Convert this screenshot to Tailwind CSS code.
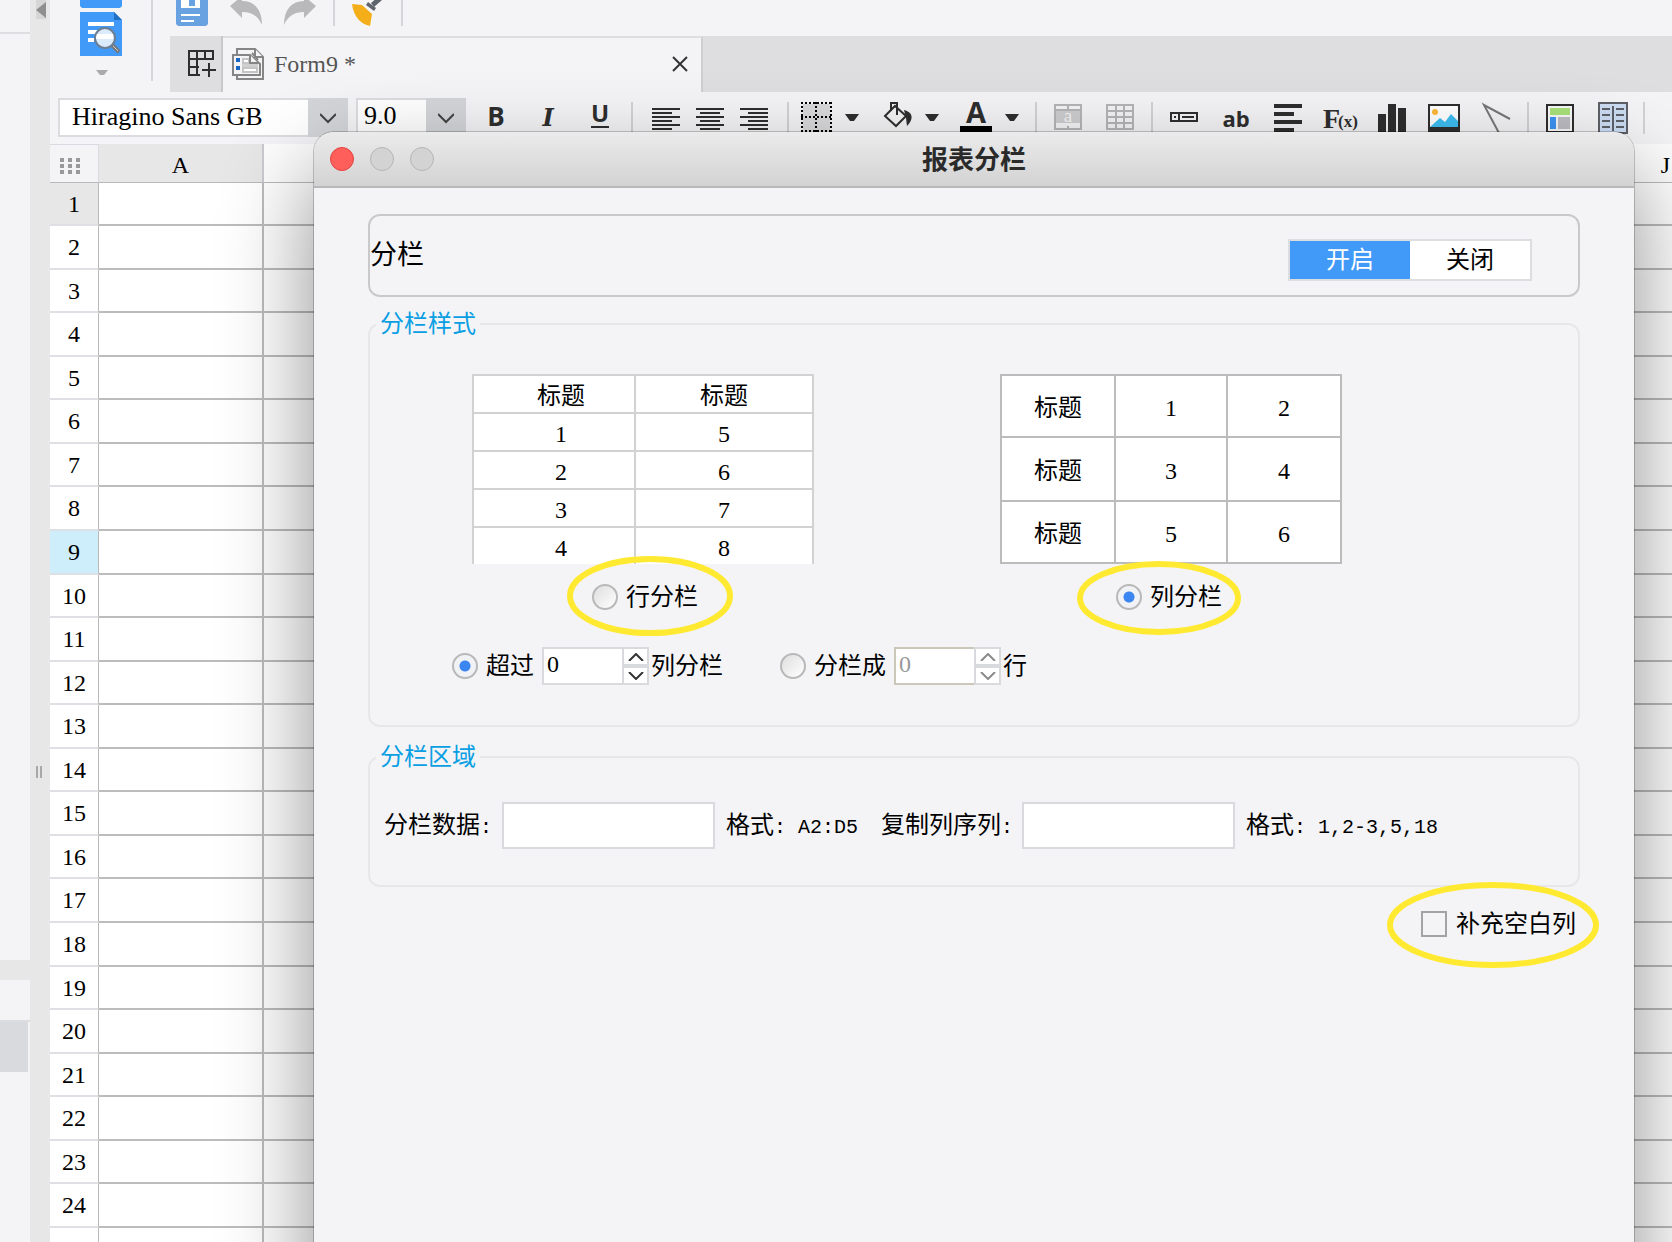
<!DOCTYPE html>
<html lang="zh-Hans">
<head>
  <meta charset="utf-8" />
  <meta name="viewport" content="width=device-width, initial-scale=1.0" />
  <title>报表分栏</title>
  <script src="https://cdn.jsdelivr.net/npm/@tailwindcss/browser@4"></script>
</head>
<body class="relative flex h-screen overflow-hidden bg-[#f4f4f7] font-['Liberation_Serif','Noto_Sans_CJK_SC',serif] text-2xl text-black">

  <!-- 左侧面板 -->
  <aside class="flex w-[30px] shrink-0 flex-col">
    <div class="h-[34px] border-b-2 border-[#dedee2]"></div>
    <div class="h-[926px]"></div>
    <div class="h-5 bg-[#e7e7e7]"></div>
    <div class="h-10"></div>
    <div class="border-t-2 border-[#dcdde1]"><div class="mr-0.5 h-[50px] bg-[#d9dade]"></div></div>
  </aside>

  <!-- 分隔条 -->
  <div class="flex w-5 shrink-0 flex-col bg-[#e7e7e7]">
    <button aria-label="收起" class="h-5 w-full">
      <svg class="h-5 w-5" viewBox="0 0 20 20"><rect x="6" width="10" height="19" fill="#d6d6d6" /><path d="M16 2v16L6 10z" fill="#8f8f8f" /></svg>
    </button>
    <div class="mt-[746px] ml-1.5 flex gap-0.5">
      <span class="h-3 w-0.5 bg-[#a8a8a8]"></span>
      <span class="h-3 w-0.5 bg-[#a8a8a8]"></span>
    </div>
  </div>

  <main class="flex min-w-0 flex-1 flex-col overflow-hidden">
    <div class="flex h-[92px] shrink-0">
      <div class="flex w-[101px] flex-col items-center">
        <button aria-label="预览">
          <svg class="h-20 w-[42px]" viewBox="0 0 42 80">
            <path d="M0 0h42v6l-2 2H2L0 6z" fill="#4199f8" />
            <path d="M0 12h34l8 8v36H0z" fill="#4199f8" />
            <path d="M34 12v8h8z" fill="#1f6fc4" />
            <path d="M8 22h26v4H8zM8 30h9v4H8zM8 38h6v4H8z" fill="#fff" />
            <path d="M32 45l7 7" stroke="#777" stroke-width="4" />
            <path d="M33 46l5 5" stroke="#ccc" stroke-width="1" />
            <circle cx="25" cy="38" r="10" fill="#dcebfb" stroke="#6d7f92" stroke-width="2" />
            <path d="M17 34h16v5H16z" fill="#fff" />
            <path d="M16 70h12l-4 5h-4z" fill="#aaa" />
          </svg>
        </button>
      </div>
      <div class="h-[81px] w-0.5 bg-[#d6d6da]"></div>

      <div class="flex min-w-0 flex-1 flex-col pl-[17px]">
        <div class="flex h-9 items-start pl-1.5">
          <button aria-label="保存">
            <svg class="h-[26px] w-8" viewBox="0 0 32 26"><path d="M0 0h32v24l-2 2H2l-2-2z" fill="#69a2e0" /><path d="M5 0h19v8H5zM5 14h19v2H5zM5 20h13v2H5z" fill="#fff" /><path d="M13 0h6v6h-6z" fill="#69a2e0" /></svg>
          </button>
          <button aria-label="撤销" class="ml-[22px]">
            <svg class="h-[26px] w-8" viewBox="0 0 32 26"><path d="M0 6L12-4v5c12 0 20 8 20 24-4-9-10-13-20-13v6z" fill="#b9b9bb" /></svg>
          </button>
          <button aria-label="重做" class="ml-[22px]">
            <svg class="h-[26px] w-8" viewBox="0 0 32 26"><path d="M32 6L20-4v5C8 1 0 9 0 25c4-9 10-13 20-13v6z" fill="#b9b9bb" /></svg>
          </button>
          <span class="ml-[17px] h-[26px] w-0.5 bg-[#d6d6da]"></span>
          <button aria-label="格式刷" class="ml-[17px]">
            <svg class="h-[26px] w-8" viewBox="0 0 32 26"><path d="M0 4l10 1 10 9-2 12c-9-2-16-8-18-22z" fill="#f3ae19" /><path d="M14 5l8 6 2-3-8-6z" fill="#5f636b" /><path d="M19 3l7-6h4v3l-8 7z" fill="#5f636b" /></svg>
          </button>
          <span class="ml-[17px] h-[26px] w-0.5 bg-[#d6d6da]"></span>
        </div>

        <!-- 标签栏 -->
        <div class="flex h-14 bg-[#dedee0]">
          <button aria-label="新建" class="w-[53px] border-r-2 border-[#c8c8cb] pl-[17px]">
            <svg class="h-[30px] w-[30px]" viewBox="0 0 30 30" fill="none" stroke="#2e2e2e" stroke-width="2"><path d="M13 26H2V2h24v9M2 10h24M2 18h10M10 2v24M18 2v8" /><path d="M15 21h14M22 14v14" /></svg>
          </button>
          <div class="flex w-[480px] items-center border-t-2 border-r-2 border-t-[#dedee0] border-r-[#cfcfd2] bg-[#f4f4f7] pb-0.5 pl-[9px] text-[#555]">
            <svg class="h-8 w-8" viewBox="0 0 32 32" fill="#f4f4f7" stroke="#858585" stroke-width="2">
              <path d="M5 1h18l8 8v22H5z" /><path d="M23 1v8h8M20 5l6 7" /><path d="M1 7h17l10 9v11H1z" />
              <path d="M10 10h8v5h8v8H10z" fill="#cfcfcf" stroke="none" /><path d="M11 11h6v4h-6zM11 20h14v4H11z" fill="#fff" stroke="#c4c4c4" />
              <path d="M18 7v8h8" /><path d="M4 10h4v4H4zM4 18h4v4H4z" fill="#1a66c2" stroke="none" />
            </svg>
            <span class="ml-2.5">Form9 *</span>
            <button aria-label="关闭标签" class="mr-[13px] ml-auto">
              <svg class="h-4 w-4" viewBox="0 0 16 16" stroke="#333" stroke-width="2"><path d="M1 1l14 14M15 1L1 15" /></svg>
            </button>
          </div>
        </div>
      </div>
    </div>

    <!-- 格式工具栏 -->
    <div class="flex h-[52px] shrink-0 items-start pt-1.5 pl-2 text-[#2e2e2e]">
      <div class="flex h-[39px] w-[290px] shrink-0 text-black">
        <input aria-label="字体" value="Hiragino Sans GB" class="min-w-0 flex-1 border-2 border-r-0 border-[#dcdce0] bg-white pl-3 text-[26px]" />
        <button aria-label="选择字体" class="flex w-10 items-center justify-center bg-[#d4d5d9]">
          <svg class="h-4 w-4" viewBox="0 0 16 16" fill="none" stroke="#444" stroke-width="2"><path d="M0 4l8 8 8-8" /></svg>
        </button>
      </div>
      <div class="ml-2 flex h-[39px] w-[110px] shrink-0 text-black">
        <input aria-label="字号" value="9.0" class="min-w-0 flex-1 border-2 border-r-0 border-[#dcdce0] bg-white pb-0.5 pl-1.5 text-[26px]" />
        <button aria-label="选择字号" class="flex w-10 items-center justify-center bg-[#d4d5d9]">
          <svg class="h-4 w-4" viewBox="0 0 16 16" fill="none" stroke="#444" stroke-width="2"><path d="M0 4l8 8 8-8" /></svg>
        </button>
      </div>

      <div class="mt-1 ml-3.5 flex h-8 shrink-0">
        <div class="flex gap-5 font-['Open_Sans',sans-serif] text-[26px] font-bold">
          <button class="h-8 w-8 pb-1 leading-6">B</button>
          <button class="h-8 w-8 font-['DejaVu_Serif',serif] text-2xl leading-7 italic">I</button>
          <button class="flex h-8 w-8 justify-center"><span class="flex h-[26px] w-[18px] justify-center border-b-2 border-[#2e2e2e] text-2xl leading-[22px]">U</span></button>
        </div>
        <span class="mx-[15px] w-0.5 bg-[#d2d2d5]"></span>
        <div class="flex gap-3 px-0.5">
          <button aria-label="左对齐"><svg class="h-8 w-8" viewBox="0 0 32 32" fill="currentColor"><path d="M2 6h28v2H2zM2 10h20v2H2zM2 14h28v2H2zM2 18h20v2H2zM2 22h28v2H2zM2 26h20v2H2z" /></svg></button>
          <button aria-label="居中"><svg class="h-8 w-8" viewBox="0 0 32 32" fill="currentColor"><path d="M2 6h28v2H2zM6 10h20v2H6zM2 14h28v2H2zM6 18h20v2H6zM2 22h28v2H2zM6 26h20v2H6z" /></svg></button>
          <button aria-label="右对齐"><svg class="h-8 w-8" viewBox="0 0 32 32" fill="currentColor"><path d="M2 6h28v2H2zM10 10h20v2H10zM2 14h28v2H2zM10 18h20v2H10zM2 22h28v2H2zM10 26h20v2H10z" /></svg></button>
        </div>
        <span class="mx-[15px] w-0.5 bg-[#d2d2d5]"></span>
        <div class="-ml-1 flex gap-5">
          <button aria-label="边框" class="flex gap-3">
            <svg class="h-8 w-8" viewBox="0 0 32 32"><path d="M3 2h27v27H3z" fill="#d9d9db" /><path d="M1 1h31M1 15h31M1 29h31" stroke="#000" stroke-width="2" stroke-dasharray="2 2" /><path d="M2 0v30M16 0v30M31 0v30" stroke="#000" stroke-width="2" stroke-dasharray="2 2" /></svg>
            <svg class="h-8 w-4" viewBox="0 0 16 32" fill="currentColor"><path d="M1 12h14l-5 7H6z" /></svg>
          </button>
          <button aria-label="填充" class="flex gap-3">
            <svg class="h-8 w-8" viewBox="0 0 32 32"><path d="M0 24h32v8H0z" fill="#f4f4f4" /><path d="M5 14L15 4l11 10-10 10z" fill="#f4f4f4" stroke="#2e2e2e" stroke-width="2" /><path d="M11 9V1h6v12" fill="none" stroke="#2e2e2e" stroke-width="2" /><path d="M24 8c9 2 10 9 3 16l-1-8z" fill="#2e2e2e" /></svg>
            <svg class="h-8 w-4" viewBox="0 0 16 32" fill="currentColor"><path d="M1 12h14l-5 7H6z" /></svg>
          </button>
          <button aria-label="字体颜色" class="flex gap-3">
            <svg class="h-8 w-8 overflow-visible font-['Open_Sans',sans-serif]" viewBox="0 0 32 32"><text x="16" y="21" text-anchor="middle" font-size="29" font-weight="700" fill="#2e2e2e">A</text><path d="M0 24h32v6H0z" /></svg>
            <svg class="h-8 w-4" viewBox="0 0 16 32" fill="currentColor"><path d="M1 12h14l-5 7H6z" /></svg>
          </button>
        </div>
        <span class="mx-[15px] w-0.5 bg-[#d2d2d5]"></span>
        <div class="flex gap-5 text-[#b4b4b6]">
          <button aria-label="单元格属性"><svg class="h-8 w-8" viewBox="0 0 32 32" fill="none" stroke="currentColor" stroke-width="2"><path d="M3 3h26v24H3z" /><path d="M3 8h26" /><path d="M16 3v4M16 24v4" /><path d="M4 9h24v12H4z" fill="#cdcdcf" stroke="none" /><text x="16" y="20" text-anchor="middle" font-size="19" fill="#f4f4f4" stroke="none">a</text></svg></button>
          <button aria-label="表格"><svg class="h-8 w-8" viewBox="0 0 32 32" fill="none" stroke="currentColor" stroke-width="2"><path d="M3 3h26v24H3zM3 9h26M3 15h26M3 21h26M12 3v24M20 3v24" /></svg></button>
        </div>
        <span class="mx-[15px] w-0.5 bg-[#d2d2d5]"></span>
        <div class="flex gap-5">
          <button aria-label="控件"><svg class="h-8 w-8" viewBox="0 0 32 32" fill="none" stroke="currentColor" stroke-width="2"><path d="M3 11h26v8H3zM11 11v8M14 15h12M6 15h2" /></svg></button>
          <button class="h-8 w-8 font-['Open_Sans',sans-serif] text-[22px] leading-8 font-bold">ab</button>
          <button aria-label="富文本"><svg class="h-8 w-8" viewBox="0 0 32 32" fill="currentColor"><path d="M2 2h28v4H2zM2 10h20v4H2zM2 18h28v4H2zM2 26h20v4H2z" /></svg></button>
          <button aria-label="公式"><svg class="h-8 w-8 overflow-visible" viewBox="0 0 32 32" fill="currentColor" font-weight="700"><text x="-1" y="26" font-size="28">F</text><text x="14" y="25" font-size="17">(x)</text></svg></button>
          <button aria-label="图表"><svg class="h-8 w-8" viewBox="0 0 32 32" fill="currentColor"><path d="M2 12h8v20H2zM12 2h8v30h-8zM22 6h8v26h-8z" /></svg></button>
          <button aria-label="图片"><svg class="h-8 w-8" viewBox="0 0 32 32"><path d="M1 3h30v26H1z" fill="#fff" stroke="#2e2e2e" stroke-width="2" /><circle cx="7" cy="10" r="3" fill="#ffb938" /><path d="M2 25l10-9 5 4 6-8 7 7v6z" fill="#3dbdf0" /><path d="M0 25h32v6H0z" fill="#2e2e2e" /></svg></button>
          <button aria-label="斜线"><svg class="h-8 w-8" viewBox="0 0 32 32" fill="none" stroke="#777" stroke-width="2"><path d="M30 17L4 3l15 28" /></svg></button>
        </div>
        <span class="mx-[15px] w-0.5 bg-[#d2d2d5]"></span>
        <div class="flex gap-5">
          <button aria-label="报表"><svg class="h-8 w-8" viewBox="0 0 32 32"><path d="M3 3h26v27H3z" fill="#f8f8f8" stroke="#2e2e2e" stroke-width="2" /><path d="M6 6h20v7H6z" fill="#a9e07a" /><path d="M6 15h6v12H6z" fill="#3c93f3" /><path d="M14 15h12v12H14z" fill="#bcbcc2" /></svg></button>
          <button aria-label="分栏"><svg class="h-8 w-8" viewBox="0 0 32 32" stroke="#5d6066" stroke-width="2"><path d="M3 1h28v30H3z" fill="#cbdcf3" /><path d="M17 4v25M6 7h8M6 13h8M6 19h8M6 25h8M20 7h8M20 13h8M20 19h8M20 25h8" /></svg></button>
        </div>
        <span class="mx-[15px] w-0.5 bg-[#d2d2d5]"></span>
      </div>
    </div>

    <!-- 表格区 -->
    <table class="w-[1699px] table-fixed border-separate border-spacing-0 bg-white">
      <thead>
        <tr id="columns" class="h-[39px]">
          <th class="w-[49px] border-t border-r border-b border-[#d9dae2] border-b-[#b9b9b9] bg-[#f4f4f7] p-0">
            <svg class="mt-1 ml-2.5 h-4 w-5" viewBox="0 0 20 16" fill="#999"><path d="M0 0h4v4H0zM8 0h4v4H8zM16 0h4v4h-4zM0 6h4v4H0zM8 6h4v4H8zM16 6h4v4h-4zM0 12h4v4H0zM8 12h4v4H8zM16 12h4v4h-4z" /></svg>
          </th>
        </tr>
      </thead>
      <tbody id="rows"></tbody>
    </table>
  </main>

  <!-- 报表分栏 对话框 -->
  <section role="dialog" aria-labelledby="title" class="absolute top-[132px] right-[38px] -bottom-40 left-[314px] rounded-t-[20px] bg-[#f4f4f7] shadow-[0_40px_90px_rgba(0,0,0,0.45),0_0_0_1px_rgba(0,0,0,0.2)]">
    <header class="flex h-14 items-center rounded-t-[20px] border-b-2 border-[#b8b8b8] bg-linear-to-b from-[#ebebeb] to-[#d3d3d3] px-4">
      <div class="flex gap-4">
        <button aria-label="关闭" class="h-6 w-6 rounded-full border border-[#e2443f] bg-[#fe5f5b]"></button>
        <button aria-label="最小化" class="h-6 w-6 rounded-full border border-[#b5b5b5] bg-[#d3d3d3]"></button>
        <button aria-label="最大化" class="h-6 w-6 rounded-full border border-[#b5b5b5] bg-[#d3d3d3]"></button>
      </div>
      <h1 id="title" class="mr-[104px] flex-1 pb-0.5 text-center font-['Noto_Sans_CJK_SC',sans-serif] text-[26px] leading-8 font-bold text-[#2a2a2a]">报表分栏</h1>
    </header>

    <div class="px-[54px] pt-[26px]">
      <div class="flex h-[83px] items-center justify-between rounded-xl border-2 border-[#c9c9c9] pr-[46px]">
        <span class="text-[27px]">分栏</span>
        <div class="mt-2 flex h-[42px] w-[244px] border-2 border-[#dcdde0] bg-white">
          <button class="flex-1 bg-[#4199f8] leading-9 text-white">开启</button>
          <button class="flex-1 leading-9">关闭</button>
        </div>
      </div>

      <fieldset class="mt-[15px] rounded-xl border-2 border-[#e6e7e9] px-1.5 pt-[38px] pb-10">
        <legend class="px-1 leading-6 text-[#0a9fe3]">分栏样式</legend>
        <div class="flex gap-[186px] pl-24">
          <div class="w-[342px]">
            <div class="h-[190px] overflow-hidden">
              <table class="w-full table-fixed border-collapse bg-white text-center leading-8 [&_td]:h-[38px] [&_td]:border-2 [&_td]:border-[#d2d2d2] [&_td]:p-0 [&_td]:pt-1">
                <colgroup><col class="w-[162px]" /><col /></colgroup>
                <tbody>
                  <tr><td><span class="pl-3.5">标题</span></td><td>标题</td></tr>
                  <tr><td><span class="pl-3.5">1</span></td><td>5</td></tr>
                  <tr><td><span class="pl-3.5">2</span></td><td>6</td></tr>
                  <tr><td><span class="pl-3.5">3</span></td><td>7</td></tr>
                  <tr><td><span class="pl-3.5">4</span></td><td>8</td></tr>
                </tbody>
              </table>
            </div>
            <label class="relative mt-5 ml-[120px] inline-flex h-[26px] items-center gap-2">
              <input type="radio" name="direction" class="h-[26px] w-[26px] appearance-none rounded-full border-2 border-[#b8b8b8] bg-linear-to-br from-[#dedede] to-white checked:bg-[radial-gradient(circle,#3b86f0_0,#3b86f0_5px,#f0f2f5_6px)]" />
              行分栏
              <svg class="pointer-events-none absolute -top-7 -left-[26px] h-20 w-[168px]" viewBox="0 0 168 80" fill="none" stroke="#ffe931" stroke-width="6"><ellipse cx="84" cy="40" rx="80" ry="37" /></svg>
            </label>
          </div>
          <div class="w-[342px]">
            <table class="w-full table-fixed border-collapse bg-white text-center leading-8 [&_td]:border-2 [&_td]:border-[#bcbcbc] [&_td]:p-0 [&_td]:pt-1">
              <colgroup><col class="w-[114px]" /><col class="w-28" /><col /></colgroup>
              <tbody>
                <tr class="h-[62px]"><td>标题</td><td>1</td><td>2</td></tr>
                <tr class="h-16"><td>标题</td><td>3</td><td>4</td></tr>
                <tr class="h-[62px]"><td>标题</td><td>5</td><td>6</td></tr>
              </tbody>
            </table>
            <label class="relative mt-5 ml-[116px] inline-flex h-[26px] items-center gap-2">
              <input type="radio" name="direction" checked class="h-[26px] w-[26px] appearance-none rounded-full border-2 border-[#b8b8b8] bg-linear-to-br from-[#dedede] to-white checked:bg-[radial-gradient(circle,#3b86f0_0,#3b86f0_5px,#f0f2f5_6px)]" />
              列分栏
              <svg class="pointer-events-none absolute -top-6 -left-10 h-[76px] w-[166px]" viewBox="0 0 166 76" fill="none" stroke="#ffe931" stroke-width="6"><ellipse cx="83" cy="38" rx="79" ry="34" /></svg>
            </label>
          </div>
        </div>

        <div class="mt-[29px] flex h-[38px] items-center pl-[76px]">
          <label class="flex items-center gap-2">
            <input type="radio" name="mode" checked class="h-[26px] w-[26px] appearance-none rounded-full border-2 border-[#b8b8b8] bg-linear-to-br from-[#dedede] to-white checked:bg-[radial-gradient(circle,#3b86f0_0,#3b86f0_5px,#f0f2f5_6px)]" />
            超过
          </label>
          <div class="ml-2 flex">
            <input aria-label="超过列数" value="0" class="h-[38px] w-20 border-2 border-r-0 border-[#d9dade] bg-white pb-1 pl-[3px]" />
            <div class="flex w-[27px] flex-col text-[#333]">
              <button aria-label="增加" class="flex h-[19px] items-center justify-center border-2 border-[#d9dade] bg-white"><svg class="h-2 w-4" viewBox="0 0 16 8" fill="none" stroke="currentColor" stroke-width="2"><path d="M1 8l7-7 7 7" /></svg></button>
              <button aria-label="减少" class="flex h-[19px] items-center justify-center border-2 border-[#d9dade] bg-white"><svg class="h-2 w-4" viewBox="0 0 16 8" fill="none" stroke="currentColor" stroke-width="2"><path d="M1 0l7 7 7-7" /></svg></button>
            </div>
          </div>
          <span class="ml-0.5">列分栏</span>
          <label class="ml-[57px] flex items-center gap-2">
            <input type="radio" name="mode" class="h-[26px] w-[26px] appearance-none rounded-full border-2 border-[#b8b8b8] bg-linear-to-br from-[#dedede] to-white checked:bg-[radial-gradient(circle,#3b86f0_0,#3b86f0_5px,#f0f2f5_6px)]" />
            分栏成
          </label>
          <div class="ml-2 flex">
            <input aria-label="分栏行数" value="0" disabled class="h-[38px] w-20 border-2 border-r-0 border-[#cbc8ba] bg-white pb-1 pl-[3px] text-[#999]" />
            <div class="flex w-[27px] flex-col text-[#8a8a8a]">
              <button disabled aria-label="增加" class="flex h-[19px] items-center justify-center border-2 border-[#d9dade] bg-white"><svg class="h-2 w-4" viewBox="0 0 16 8" fill="none" stroke="currentColor" stroke-width="2"><path d="M1 8l7-7 7 7" /></svg></button>
              <button disabled aria-label="减少" class="flex h-[19px] items-center justify-center border-2 border-[#d9dade] bg-white"><svg class="h-2 w-4" viewBox="0 0 16 8" fill="none" stroke="currentColor" stroke-width="2"><path d="M1 0l7 7 7-7" /></svg></button>
            </div>
          </div>
          <span class="ml-0.5">行</span>
        </div>
      </fieldset>

      <fieldset class="mt-[18px] rounded-xl border-2 border-[#e6e7e9] px-1.5 pt-[33px] pb-9">
        <legend class="px-1 leading-6 text-[#0a9fe3]">分栏区域</legend>
        <div class="flex items-center pl-2 leading-8 whitespace-nowrap">
          <label for="data" class="w-[118px]">分栏数据<span class="font-['Liberation_Mono',monospace] text-xl">:</span></label>
          <input id="data" class="h-[47px] w-[213px] border-2 border-[#d9dade] bg-white px-2" />
          <span class="ml-[11px] w-[155px]">格式<span class="font-['Liberation_Mono',monospace] text-xl">: A2:D5</span></span>
          <label for="sequence" class="w-[141px]">复制列序列<span class="font-['Liberation_Mono',monospace] text-xl">:</span></label>
          <input id="sequence" class="h-[47px] w-[213px] border-2 border-[#d9dade] bg-white px-2" />
          <span class="ml-[11px]">格式<span class="font-['Liberation_Mono',monospace] text-xl">: 1,2-3,5,18</span></span>
        </div>
      </fieldset>

      <div class="mt-6 flex justify-end pr-1">
        <label class="relative flex h-[26px] items-center gap-[9px]">
          <input type="checkbox" class="h-[26px] w-[26px] appearance-none border-2 border-[#a3a3a3] checked:bg-[#4199f8]" />
          补充空白列
          <svg class="pointer-events-none absolute -top-[30px] -left-[35px] h-[88px] w-[214px]" viewBox="0 0 214 88" fill="none" stroke="#ffe931" stroke-width="6"><ellipse cx="107" cy="44" rx="103" ry="40" /></svg>
        </label>
      </div>
    </div>
  </section>

  <script>
    const columns = ["A", "B", "C", "D", "E", "F", "G", "H", "I", "J"];
    const shortRows = [1, 3, 5, 7, 10, 12, 14, 16, 19, 21, 23];
    const headerColors = { 1: "bg-[#e7e7e7]", 9: "bg-[#cfeefb]" };

    document.getElementById("columns").insertAdjacentHTML("beforeend", columns.map(name => `
      <th class="border-r-2 border-b border-r-[#c9cad2] border-b-[#b9b9b9] p-0 pt-1 leading-8 font-normal ${name === "A" ? "bg-[#e7e7e7]" : "bg-[#fdfdfd]"}">${name}</th>
    `).join(""));

    const cells = columns.map(() => `<td class="border-r-2 border-b-2 border-[#bcbcbc] p-0"></td>`).join("");
    for (let row = 1; row <= 25; row++) {
      document.getElementById("rows").insertAdjacentHTML("beforeend", `
        <tr class="${shortRows.includes(row) ? "h-[43px]" : "h-[44px]"}">
          <th class="border-r border-b-2 border-r-[#b9b9b9] border-b-[#dfe0e5] p-0 leading-8 font-normal ${headerColors[row] || ""}">${row}</th>
          ${cells}
        </tr>
      `);
    }
  </script>
</body>
</html>
